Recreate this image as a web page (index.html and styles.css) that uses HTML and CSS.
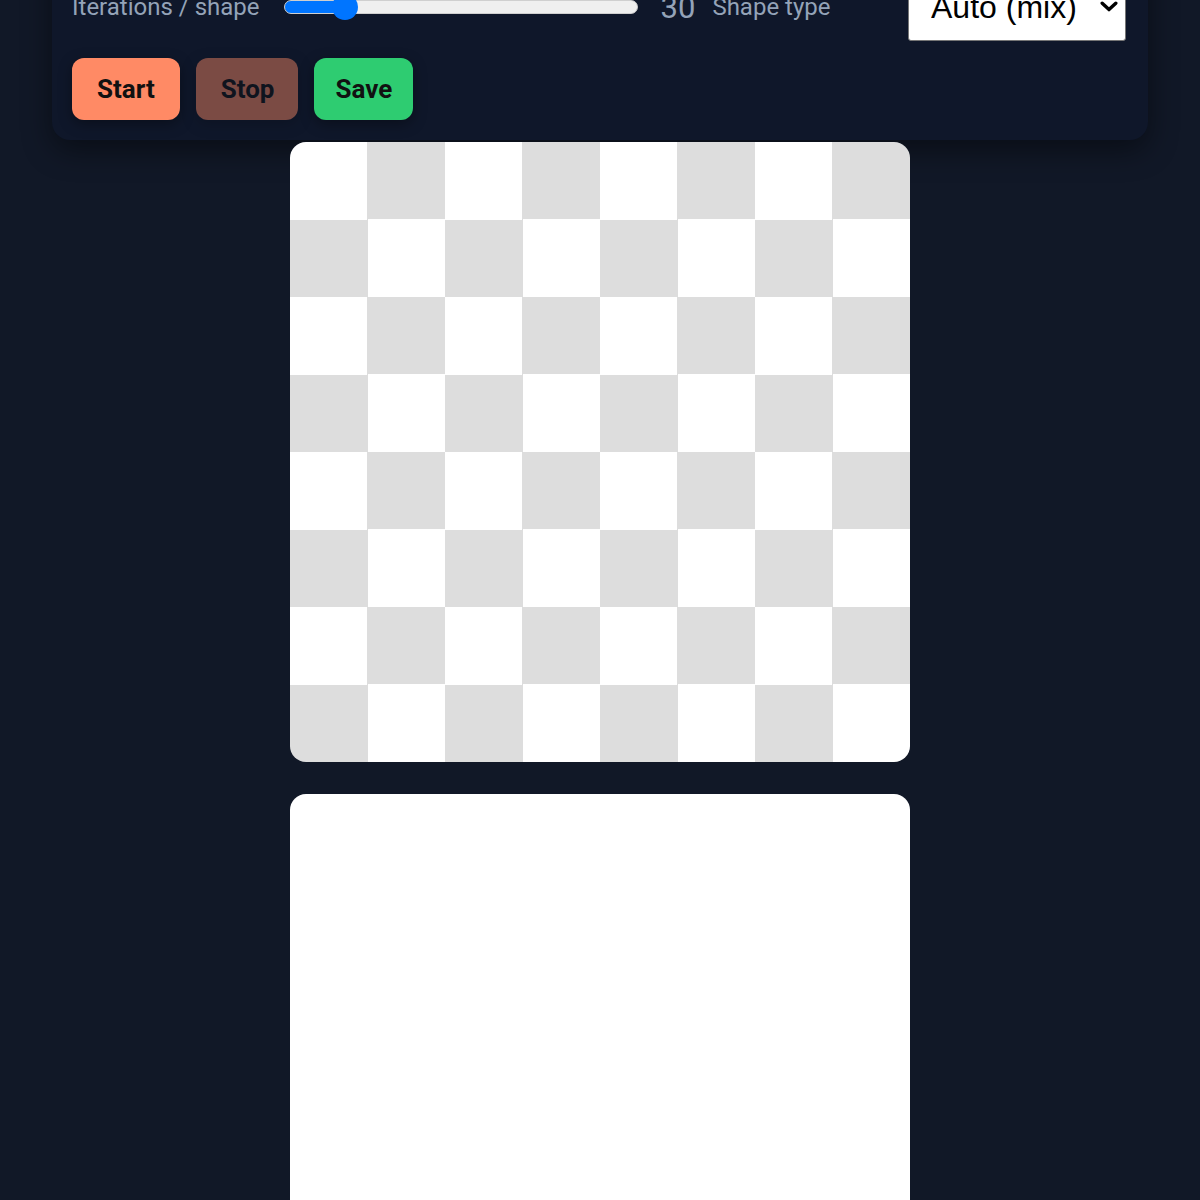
FILE: index.html
```html
<!DOCTYPE html>
<html lang="en">
<head>
<meta charset="utf-8">
<title>Shapes</title>
<link rel="stylesheet" href="styles.css">
</head>
<body>
<main class="app">
  <section class="panel">
    <div class="controls">
      <label class="ctl-label" for="iters">Iterations / shape</label>
      <input class="slider" id="iters" type="range" min="1" max="200" value="30">
      <span class="ctl-value">30</span>
      <label class="ctl-label shape-label" for="shape">Shape type</label>
      <div class="select-wrap">
        <select class="select" id="shape">
          <option>Auto (mix)</option>
          <option>Triangles</option>
          <option>Rectangles</option>
          <option>Ellipses</option>
        </select>
        <svg class="chevron" width="18" height="11" viewBox="0 0 18 11" aria-hidden="true">
          <polyline points="2.2,2.2 9,8.6 15.8,2.2" fill="none" stroke="#000" stroke-width="3.4" stroke-linecap="round" stroke-linejoin="round"/>
        </svg>
      </div>
    </div>
    <div class="actions">
      <button class="btn btn-start">Start</button>
      <button class="btn btn-stop" disabled>Stop</button>
      <button class="btn btn-save">Save</button>
    </div>
  </section>
  <div class="canvas checker"></div>
  <div class="canvas blank"></div>
</main>
</body>
</html>
```
FILE: styles.css
```css
html, body {
  margin: 0;
  padding: 0;
  background: #111827;
  font-family: Roboto, "Noto Sans", sans-serif;
}

.app {
  width: 1096px;
  margin: 0 auto;
  display: flex;
  flex-direction: column;
  align-items: center;
}

.panel {
  align-self: stretch;
  margin-top: -47px;
  padding: 20px;
  background: #0f172a;
  border-radius: 18px;
  box-shadow: 0 10px 30px rgba(0, 0, 0, 0.45);
}

.controls {
  display: flex;
  align-items: center;
}

.ctl-label {
  font-size: 24px;
  color: #94a3b8;
}

.slider {
  -webkit-appearance: none;
  appearance: none;
  width: 354px;
  height: 14px;
  margin: 0 0 0 24px;
  border-radius: 7px;
  background: linear-gradient(to right, #0075ff 0, #0075ff 62px, #efefef 62px);
  border: 1px solid #cfcfcf;
  box-sizing: border-box;
}

.slider::-webkit-slider-thumb {
  -webkit-appearance: none;
  appearance: none;
  width: 26px;
  height: 26px;
  border-radius: 50%;
  background: #0075ff;
  border: none;
}

.ctl-value {
  font-size: 31px;
  color: #94a3b8;
  margin-left: 23px;
}

.shape-label {
  margin-left: 17px;
}

.select-wrap {
  position: relative;
  margin-left: auto;
  margin-right: 2px;
}

.select {
  -webkit-appearance: none;
  appearance: none;
  display: block;
  width: 218px;
  height: 68px;
  font-family: "Liberation Sans", Arial, sans-serif;
  font-size: 32px;
  color: #000;
  background: #fff;
  border: 1.5px solid #767676;
  border-radius: 3px;
  padding: 0 0 0 22px;
}

.chevron {
  position: absolute;
  right: 8px;
  top: calc(50% - 6px);
  pointer-events: none;
}

.actions {
  display: flex;
  gap: 16px;
  margin-top: 17px;
}

.btn {
  font-family: Roboto, sans-serif;
  font-weight: 700;
  font-size: 26px;
  color: #111;
  border: none;
  border-radius: 12px;
  height: 62px;
  padding: 0 24px;
  box-shadow: 0 4px 14px rgba(0, 0, 0, 0.35);
}

.btn-start { background: #ff8a65; padding: 0 25px; }
.btn-stop { background: #ff8a65; opacity: 0.45; padding: 0 24px 0 25px; }
.btn-save { background: #2ecc71; padding: 0 21px; }

.canvas {
  width: 620px;
  height: 620px;
  border-radius: 16px;
  background: #fff;
}

.checker {
  margin-top: 2px;
  background: repeating-conic-gradient(#dddddd 0 25%, #ffffff 0 50%);
  background-size: 155px 155px;
}

.blank {
  margin-top: 32px;
}
```
